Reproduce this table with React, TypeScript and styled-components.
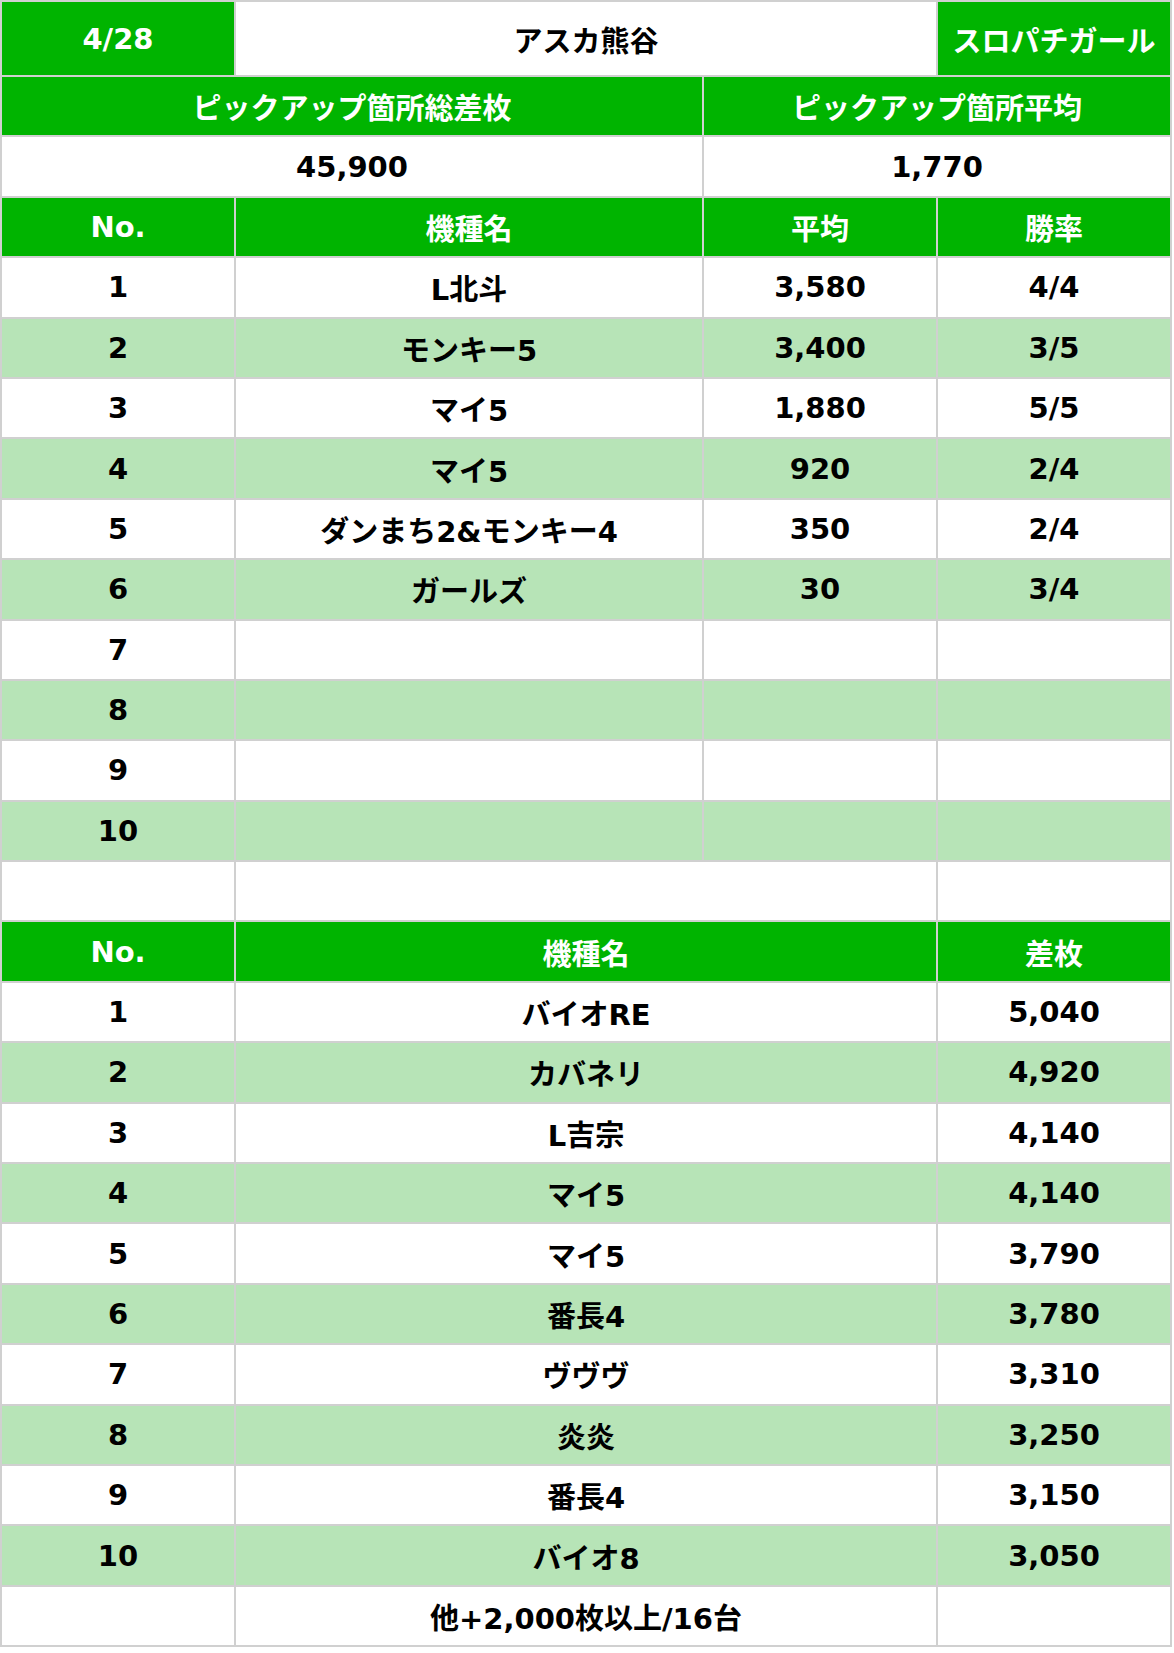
import React from 'react';
import styled, { createGlobalStyle } from "styled-components";

const GlobalStyle = createGlobalStyle`
    html, body {
        margin: 0;
        padding: 0;
        background: #ffffff;
    }
`;

type Tone = 'head' | 'white' | 'stripe';

const topMachines = [
    { no: 1, name: "L北斗", avg: "3,580", win: "4/4" },
    { no: 2, name: "モンキー5", avg: "3,400", win: "3/5" },
    { no: 3, name: "マイ5", avg: "1,880", win: "5/5" },
    { no: 4, name: "マイ5", avg: "920", win: "2/4" },
    { no: 5, name: "ダンまち2&モンキー4", avg: "350", win: "2/4" },
    { no: 6, name: "ガールズ", avg: "30", win: "3/4" },
    { no: 7, name: "", avg: "", win: "" },
    { no: 8, name: "", avg: "", win: "" },
    { no: 9, name: "", avg: "", win: "" },
    { no: 10, name: "", avg: "", win: "" },
];

const topUnits = [
    { no: 1, name: "バイオRE", diff: "5,040" },
    { no: 2, name: "カバネリ", diff: "4,920" },
    { no: 3, name: "L吉宗", diff: "4,140" },
    { no: 4, name: "マイ5", diff: "4,140" },
    { no: 5, name: "マイ5", diff: "3,790" },
    { no: 6, name: "番長4", diff: "3,780" },
    { no: 7, name: "ヴヴヴ", diff: "3,310" },
    { no: 8, name: "炎炎", diff: "3,250" },
    { no: 9, name: "番長4", diff: "3,150" },
    { no: 10, name: "バイオ8", diff: "3,050" },
];

function App() {
    const rowTone = (no: number): Tone => (no % 2 === 0 ? 'stripe' : 'white');

    return (
        <>
            <GlobalStyle />
            <Sheet>
                {/* 店舗情報 */}
                <TitleRow>
                    <Cell $tone="head">4/28</Cell>
                    <Cell $tone="white" $span={2}>アスカ熊谷</Cell>
                    <Cell $tone="head">スロパチガール</Cell>
                </TitleRow>
                <Row>
                    <Cell $tone="head" $span={2}>ピックアップ箇所総差枚</Cell>
                    <Cell $tone="head" $span={2}>ピックアップ箇所平均</Cell>
                </Row>
                <Row>
                    <Cell $tone="white" $span={2}>45,900</Cell>
                    <Cell $tone="white" $span={2}>1,770</Cell>
                </Row>

                {/* 機種別 */}
                <Row>
                    <Cell $tone="head">No.</Cell>
                    <Cell $tone="head">機種名</Cell>
                    <Cell $tone="head">平均</Cell>
                    <Cell $tone="head">勝率</Cell>
                </Row>
                {topMachines.map((item) => (
                    <Row key={"m" + item.no}>
                        <Cell $tone={rowTone(item.no)}>{item.no}</Cell>
                        <Cell $tone={rowTone(item.no)}>{item.name}</Cell>
                        <Cell $tone={rowTone(item.no)}>{item.avg}</Cell>
                        <Cell $tone={rowTone(item.no)}>{item.win}</Cell>
                    </Row>
                ))}
                <Row>
                    <Cell $tone="white" />
                    <Cell $tone="white" $span={2} />
                    <Cell $tone="white" />
                </Row>

                {/* 台別 */}
                <Row>
                    <Cell $tone="head">No.</Cell>
                    <Cell $tone="head" $span={2}>機種名</Cell>
                    <Cell $tone="head">差枚</Cell>
                </Row>
                {topUnits.map((item) => (
                    <Row key={"u" + item.no}>
                        <Cell $tone={rowTone(item.no)}>{item.no}</Cell>
                        <Cell $tone={rowTone(item.no)} $span={2}>{item.name}</Cell>
                        <Cell $tone={rowTone(item.no)}>{item.diff}</Cell>
                    </Row>
                ))}
                <Row>
                    <Cell $tone="white" />
                    <Cell $tone="white" $span={2}>他+2,000枚以上/16台</Cell>
                    <Cell $tone="white" />
                </Row>
            </Sheet>
        </>
    );
}

const Sheet = styled.div`
    width: 1172px;
    display: flex;
    flex-direction: column;
    gap: 2px;
    padding: 2px;
    box-sizing: border-box;
    background: #d0d0d0;
    font-family: "DejaVu Sans", "Noto Sans CJK JP", sans-serif;
    font-weight: bold;
    font-size: 29px;
`;

const Row = styled.div`
    display: grid;
    grid-template-columns: 232px 466px 232px 232px;
    column-gap: 2px;
    height: 58.4px;
`;

const TitleRow = styled(Row)`
    height: 73px;
`;

const toneBg: Record<Tone, string> = {
    head: "#00b400",
    white: "#ffffff",
    stripe: "#b7e4b7",
};

const Cell = styled.div<{ $tone: Tone; $span?: number }>`
    grid-column: span ${(p) => p.$span || 1};
    display: flex;
    align-items: center;
    justify-content: center;
    background: ${(p) => toneBg[p.$tone]};
    color: ${(p) => (p.$tone === "head" ? "#ffffff" : "#000000")};
    white-space: nowrap;
    overflow: hidden;
`;

export default App
